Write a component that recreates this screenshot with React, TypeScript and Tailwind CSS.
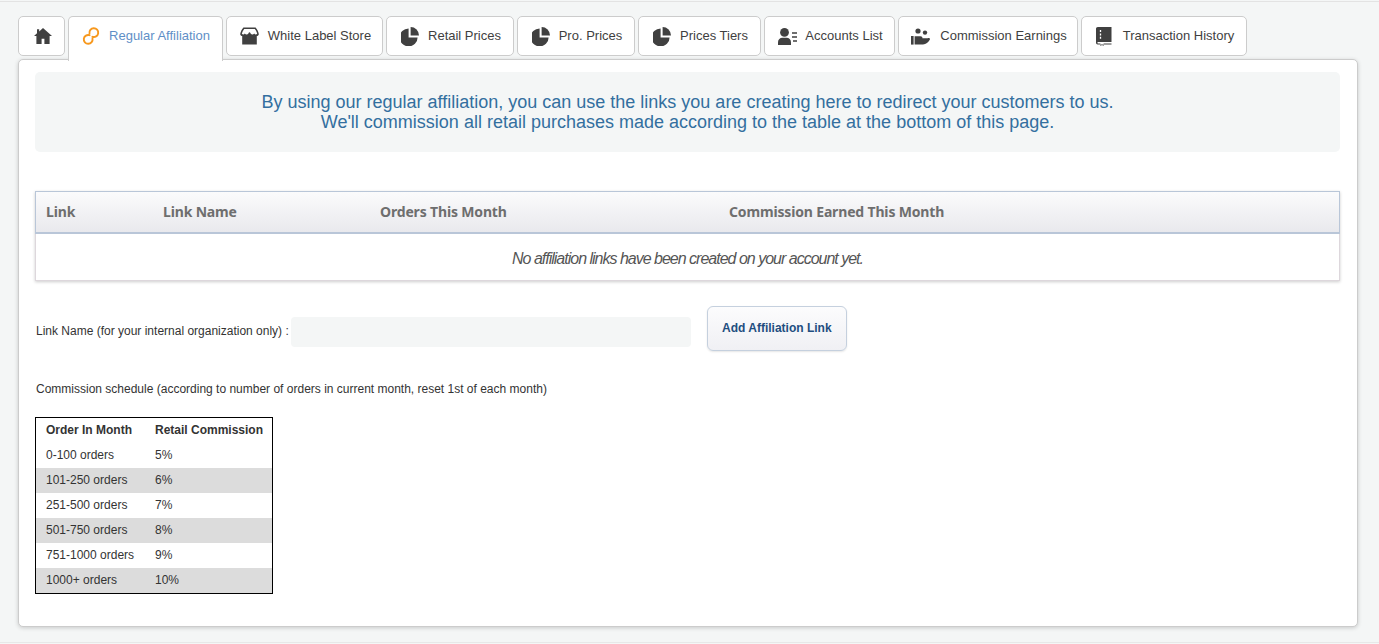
import type { ReactNode } from 'react';

const FONT = "font-['Liberation_Sans',Arial,sans-serif]";

function HomeIcon() {
  return (
    <svg width="18" height="16" viewBox="0 0 18 16" className="text-[#404040]">
      <path fill="currentColor" d="M9 0 L18 8 L15.6 8 L15.6 16 L10.4 16 L10.4 10.8 L7.6 10.8 L7.6 16 L2.4 16 L2.4 8 L0 8 L3 5.3 L3 1.2 L5.2 1.2 L5.2 3.4 Z" />
    </svg>
  );
}

function ChainIcon() {
  return (
    <svg width="18" height="18" viewBox="0 0 18 18" fill="none" stroke="#f7981d" strokeWidth="1.9" strokeLinecap="round">
      <path d="M7.5 6.5 A4.4 4.4 0 1 1 10.4 9.8" />
      <path d="M10.5 11.5 A4.4 4.4 0 1 1 7.6 8.2" />
    </svg>
  );
}

function StoreIcon() {
  return (
    <svg width="19" height="18" viewBox="0 0 19 18" className="text-[#404040]">
      <path fill="currentColor" d="M3.4 0.5 H15.6 C17.2 2.2 18.4 4.5 18.8 7 C18.8 8.4 17.6 9 16.8 9 V17.5 H2.2 V9 C1.4 9 0.2 8.4 0.2 7 C0.6 4.5 1.8 2.2 3.4 0.5 Z" />
      <path fill="#fff" d="M4.2 2 H14.8 C15.9 3.4 16.8 5 17.2 6.8 C16.4 7.9 14.9 7.8 14.2 6.6 C13.4 7.9 11.4 7.9 10.6 6.6 C10 4.9 9 4.9 8.4 6.6 C7.6 7.9 5.6 7.9 4.8 6.6 C4.1 7.8 2.6 7.9 1.8 6.8 C2.2 5 3.1 3.4 4.2 2 Z" />
    </svg>
  );
}

function PieIcon() {
  return (
    <svg width="18" height="19" viewBox="0 0 18 19" className="text-[#404040]">
      <path fill="currentColor" d="M7.6 1.4 V10.4 H16.6 A9 9 0 1 1 7.6 1.4 Z" />
      <path fill="currentColor" d="M9.6 0 A8.4 8.4 0 0 1 18 8.4 H9.6 Z" />
    </svg>
  );
}

function AccountsIcon() {
  return (
    <svg width="19" height="17" viewBox="0 0 19 17" className="text-[#404040]">
      <circle cx="6.5" cy="4.4" r="4.4" fill="currentColor" />
      <path fill="currentColor" d="M0 17 V14.2 C0 11.4 2 9.8 4.4 9.8 H8.6 C11 9.8 13 11.4 13 14.2 V17 Z" />
      <path stroke="currentColor" strokeWidth="1.4" d="M14 5 H19 M14 9 H19 M15 13 H19" />
    </svg>
  );
}

function EarningsIcon() {
  return (
    <svg width="19" height="17" viewBox="0 0 19 17" className="text-[#404040]">
      <circle cx="7" cy="3" r="2.6" fill="currentColor" />
      <circle cx="14" cy="4.6" r="2.2" fill="currentColor" />
      <rect x="0" y="8" width="2.6" height="8.6" fill="currentColor" />
      <path fill="currentColor" d="M3.6 8.2 H9.5 C11 8.2 11.6 9.2 11.4 10.2 H16.6 C18.4 9.6 19.4 10.6 18.8 11.8 C17.4 14 15 16.6 12 16.6 H3.6 Z" />
    </svg>
  );
}

function HistoryIcon() {
  return (
    <svg width="16" height="19" viewBox="0 0 16 19" className="text-[#404040]">
      <path fill="currentColor" d="M1.8 0 H15.5 V15 H2 C1.2 15 1.2 16.4 2 16.4 H4.4 V19 L6 18 L7.6 19 V16.4 H15.5 V17.6 H9 V17.6 H1.8 C0.6 17.6 0 16.6 0 15.6 V1.8 C0 0.8 0.8 0 1.8 0 Z" />
      <path stroke="#fff" strokeWidth="1.3" d="M4.5 3 V5 M4.5 6.4 V8.4 M4.5 9.8 V11.8" />
    </svg>
  );
}

function Tab({ icon, label, width, gap = 'gap-[9px]' }: { icon: ReactNode; label?: string; width: string; gap?: string }) {
  return (
    <div className={`${width} h-10 pl-[2px] flex items-center justify-center ${gap} bg-white border border-[#cccccc] rounded-[5px] text-[13px] text-[#3f3f3f] shrink-0`}>
      {icon}
      {label && <span>{label}</span>}
    </div>
  );
}

const TIERS = [
  ['0-100 orders', '5%'],
  ['101-250 orders', '6%'],
  ['251-500 orders', '7%'],
  ['501-750 orders', '8%'],
  ['751-1000 orders', '9%'],
  ['1000+ orders', '10%'],
];

export default function App() {
  return (
    <div className={`${FONT} h-[644px] overflow-hidden bg-[#f4f6f6] pt-px flex flex-col`}>
      <div className="border-t border-[#e3e3e3]" />

      {/* Tabs */}
      <div className="mt-[14px] ml-[18px] flex items-start gap-[3px] relative z-10">
        <Tab width="w-[47px]" icon={<HomeIcon />} />
        <div className="w-[155px] h-[45px] pl-[1px] flex items-center justify-center gap-[9px] pb-[7px] bg-white border border-b-0 border-[#cccccc] rounded-t-[5px] text-[13px] text-[#5f8fc7] shrink-0">
          <ChainIcon />
          <span>Regular Affiliation</span>
        </div>
        <Tab width="w-[157px]" icon={<StoreIcon />} label="White Label Store" />
        <Tab width="w-[128px]" icon={<PieIcon />} label="Retail Prices" />
        <Tab width="w-[118px]" icon={<PieIcon />} label="Pro. Prices" />
        <Tab width="w-[123px]" icon={<PieIcon />} label="Prices Tiers" />
        <Tab width="w-[131px]" icon={<AccountsIcon />} label="Accounts List" gap="gap-[8px]" />
        <Tab width="w-[180px]" icon={<EarningsIcon />} label="Commission Earnings" gap="gap-[10px]" />
        <Tab width="w-[166px]" icon={<HistoryIcon />} label="Transaction History" gap="gap-[11px]" />
      </div>

      {/* Panel */}
      <div className="-mt-[2px] ml-[18px] w-[1340px] h-[568px] bg-white border border-[#cccccc] rounded-[5px] shadow-[0_1px_4px_rgba(0,0,0,0.18)] pl-4 pr-[17px] pt-3">
        <div className="h-20 bg-[#f4f6f6] rounded-[5px] flex flex-col items-center justify-center text-[18px] leading-5 text-[#336f9f]">
          <p>By using our regular affiliation, you can use the links you are creating here to redirect your customers to us.</p>
          <p>We'll commission all retail purchases made according to the table at the bottom of this page.</p>
        </div>

        {/* Links table */}
        <div className="mt-[39px] shadow-[0_1px_3px_rgba(0,0,0,0.2)]">
          <div className="h-[43px] pb-[2px] flex items-center border border-b-2 border-[#b9c6d8] bg-gradient-to-b from-[#fbfbfc] to-[#e9e9ed] font-['Noto_Sans',sans-serif] font-bold text-[14px] tracking-[-0.16px] text-[#6e6e6e]">
            <span className="w-[127px] pl-[10px]">Link</span>
            <span className="w-[217px]">Link Name</span>
            <span className="w-[349px]">Orders This Month</span>
            <span>Commission Earned This Month</span>
          </div>
          <div className="h-[47px] pt-[3px] flex items-center justify-center border border-t-0 border-[#ddd7dc] italic text-[16px] tracking-[-1px] text-[#555555]">
            No affiliation links have been created on your account yet.
          </div>
        </div>

        {/* Add link form */}
        <div className="mt-[25px] flex items-start h-[46px]">
          <label className="ml-[1px] mt-[16px] text-[12px] text-[#333333]">Link Name (for your internal organization only) :</label>
          <div className="ml-[2px] mt-[11px] w-[400px] h-[30px] bg-[#f4f6f6] rounded-[4px]" />
          <button className="ml-[16px] w-[140px] h-[45px] pb-[2px] bg-gradient-to-b from-[#fcfcfd] to-[#f0f0f4] border border-[#c5d0de] rounded-[6px] shadow-[0_1px_2px_rgba(0,0,0,0.1)] text-[12px] font-bold text-[#1f4e80]">
            Add Affiliation Link
          </button>
        </div>

        <p className="mt-[30px] ml-[1px] text-[12px] leading-[14px] text-[#333333]">
          Commission schedule (according to number of orders in current month, reset 1st of each month)
        </p>

        {/* Commission schedule */}
        <div className="mt-[21px] w-[238px] border border-black text-[12px] text-[#333333]">
          <div className="h-[25px] pb-[2px] flex items-center font-bold">
            <span className="w-[119px] pl-[10px]">Order In Month</span>
            <span>Retail Commission</span>
          </div>
          {TIERS.map(([orders, pct], i) => (
            <div key={orders} className={`h-[25px] pb-[2px] flex items-center ${i % 2 === 1 ? 'bg-[#dcdcdc]' : 'bg-white'}`}>
              <span className="w-[119px] pl-[10px]">{orders}</span>
              <span>{pct}</span>
            </div>
          ))}
        </div>
      </div>

      <div className="mt-auto mb-px border-t border-[#e8e8e8]" />
    </div>
  );
}
